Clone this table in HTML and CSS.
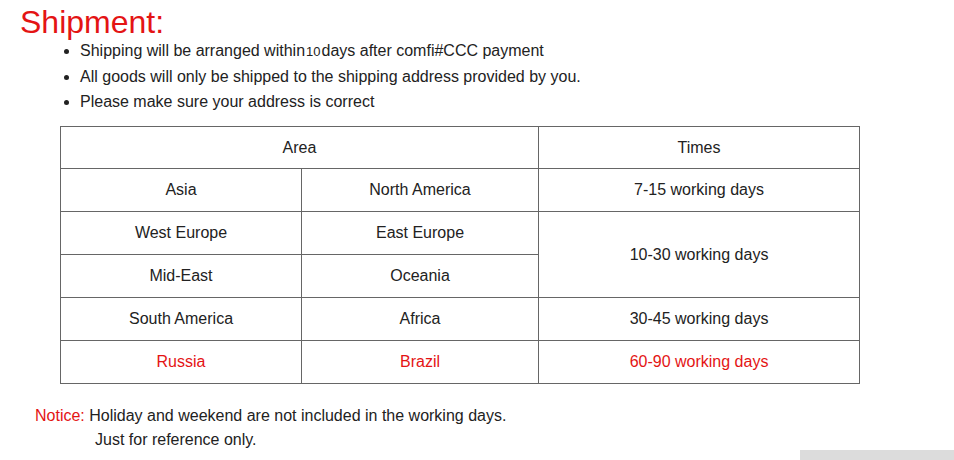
FILE: index.html
```html
<!DOCTYPE html>
<html>
<head>
<meta charset="utf-8">
<link rel="stylesheet" href="styles.css">
</head>
<body>
<div class="page">
  <h1 class="title">Shipment:</h1>
  <ul class="points">
    <li>Shipping will be arranged within<span class="small">10</span>days after comfi#CCC payment</li>
    <li>All goods will only be shipped to the shipping address provided by you.</li>
    <li>Please make sure your address is correct</li>
  </ul>
  <table class="ship">
    <colgroup><col class="c1"><col class="c2"><col class="c3"></colgroup>
    <tr class="head"><td colspan="2">Area</td><td>Times</td></tr>
    <tr><td>Asia</td><td>North America</td><td>7-15 working days</td></tr>
    <tr><td>West Europe</td><td>East Europe</td><td rowspan="2">10-30 working days</td></tr>
    <tr><td>Mid-East</td><td>Oceania</td></tr>
    <tr><td>South America</td><td>Africa</td><td>30-45 working days</td></tr>
    <tr class="red"><td>Russia</td><td>Brazil</td><td>60-90 working days</td></tr>
  </table>
  <div class="notice">
    <p><span class="red-t">Notice:</span> Holiday and weekend are not included in the working days.</p>
    <p class="indent">Just for reference only.</p>
  </div>
</div>
<div class="corner"></div>
</body>
</html>
```
FILE: styles.css
```css
html, body { margin: 0; padding: 0; background: #fff; }
body { font-family: "Liberation Sans", Arial, sans-serif; color: #222; font-size: 16px; }
.page { padding: 6px 0 0 20px; }
.title { margin: 0; font-weight: normal; font-size: 32px; line-height: 32px; color: #e41414; }
.points { margin: 0; padding: 0 0 0 60px; list-style: disc; }
.points li { line-height: 25px; }
.small { font-size: 13px; margin: 0 1px; }
.ship { margin: 12px 0 0 40px; border-collapse: collapse; width: 799px; table-layout: fixed; }
.c1 { width: 241px; } .c2 { width: 237px; } .c3 { width: 321px; }
.ship td { border: 1px solid #666; height: 42px; padding: 0; text-align: center; vertical-align: middle; }
.ship .head td { height: 41px; }
.ship .red td { color: #e41414; }
.notice { margin: 20px 0 0 15px; }
.notice p { margin: 0; line-height: 24px; }
.notice .indent { padding-left: 60px; }
.red-t { color: #e41414; }
.corner { position: absolute; left: 800px; top: 450px; width: 154px; height: 10px; background: #dcdcdc; }
```
